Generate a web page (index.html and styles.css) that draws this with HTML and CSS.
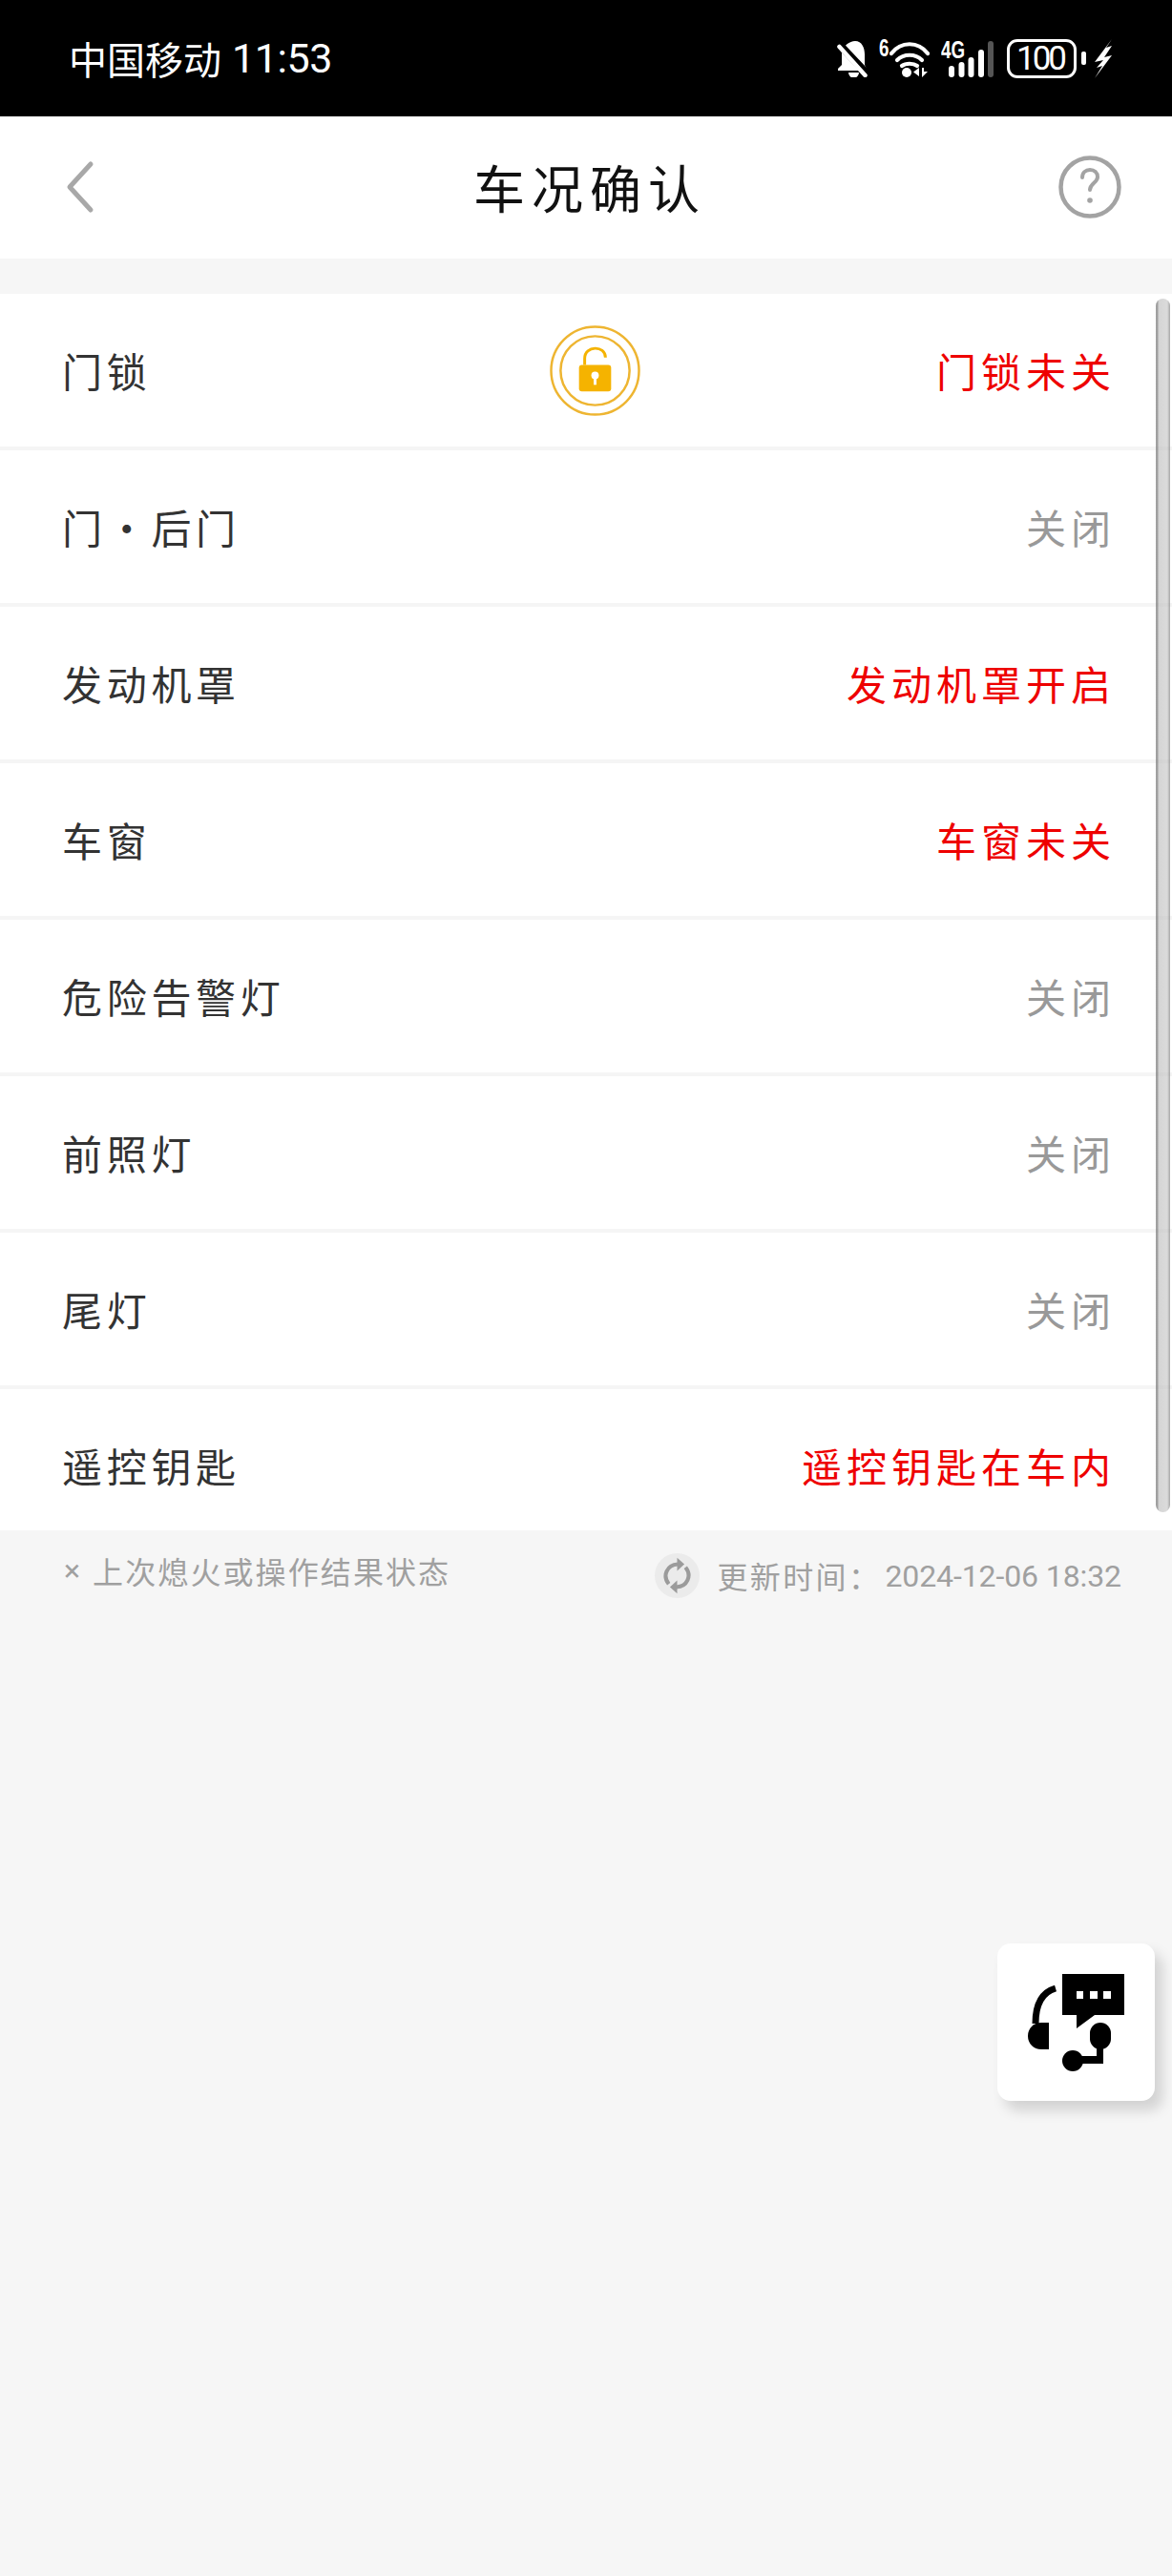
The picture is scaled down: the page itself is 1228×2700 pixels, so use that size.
FILE: index.html
```html
<!DOCTYPE html>
<html lang="zh-CN">
<head>
<meta charset="utf-8">
<title>车况确认</title>
<link rel="stylesheet" href="styles.css">
</head>
<body>
<div class="screen">
  <div class="statusbar">
    <div class="carrier">中国移动<span class="clock">11:53</span></div>
    <div class="status-icons">
      <svg class="ic-bell" viewBox="0 0 32 38"><path fill="#fff" d="M19 0c7 0 10 7 10 14v11l3 6H1v-2l4-4V11C7 5 13 0 19 0z"/><path fill="#fff" d="M12 33h11a5.500 5.500 0 0 1-11 0z"/><path d="M0 1l33 35" stroke="#000" stroke-width="8"/><path d="M2.500 6l27 30" stroke="#fff" stroke-width="4.500" stroke-linecap="round"/></svg>
      <span class="net-tag">6</span>
      <svg class="ic-wifi" viewBox="0 0 42 38"><g fill="none" stroke="#fff" stroke-width="4.200" stroke-linecap="round"><path d="M2 13C12 0 30 0 40 13"/><path d="M8 20c7-7 19-7 26 0"/><path d="M13 26c4-3 12-3 16 0"/></g><circle cx="18" cy="33" r="5" fill="#fff"/><path fill="#fff" d="M31 28v9l-6-4.500zM34 28h2v4h4l-6 6z"/></svg>
      <div class="signal">
        <span class="net-tag net-tag-4g">4G</span>
        <svg class="ic-bars" viewBox="0 0 47 38"><g fill="#fff"><rect x="0" y="26" width="6" height="12" rx="3"/><rect x="10.500" y="22" width="6" height="16" rx="3"/><rect x="20.500" y="17" width="6" height="21" rx="3"/><rect x="31" y="9" width="6" height="29" rx="3"/></g><rect x="41" y="0" width="6" height="38" rx="3" fill="#555"/></svg>
      </div>
      <div class="battery"><span class="battery-level">100</span></div>
      <span class="battery-cap"></span>
      <svg class="ic-bolt" viewBox="0 0 18 41"><path fill="#fff" d="M18 0L0 24l9-2-7 8 6-2-8 13 18-24-8 2 8-12-6 2z"/></svg>
    </div>
  </div>

  <header class="navbar">
    <svg class="ic-back" viewBox="0 0 32 56"><path d="M27 4L5 28l22 24" fill="none" stroke="#a8a8a8" stroke-width="5" stroke-linecap="round" stroke-linejoin="round"/></svg>
    <h1 class="title">车况确认</h1>
    <svg class="ic-help" viewBox="0 0 66 66"><circle cx="33" cy="33" r="30.500" fill="none" stroke="#a3a3a3" stroke-width="4.500"/><path d="M25 23c0-5 3.500-8 8-8s8 3 8 7.500c0 6-8 6.500-8 13.500" fill="none" stroke="#a3a3a3" stroke-width="4" stroke-linecap="round"/><circle cx="33" cy="47" r="2.800" fill="#a3a3a3"/></svg>
  </header>

  <section class="panel">
    <ul class="list">
      <li class="row">
        <span class="label label-lock">门锁</span>
        <svg class="ic-lock" viewBox="0 0 96 96"><circle cx="48" cy="48" r="46.500" fill="none" stroke="#eeb531" stroke-width="2.500"/><circle cx="48" cy="48" r="36.500" fill="none" stroke="#eeb531" stroke-width="2.500"/><path d="M37 42V35c0-14 22-14 22-1" fill="none" stroke="#f5b300" stroke-width="3"/><rect x="31" y="42" width="34" height="28" rx="3" fill="#f5b300"/><circle cx="48" cy="53" r="4" fill="#fff"/><rect x="46.500" y="54" width="3" height="9" fill="#fff"/></svg>
        <span class="value alert">门锁未关</span>
      </li>
      <li class="row"><span class="label">门・后门</span><span class="value">关闭</span></li>
      <li class="row"><span class="label">发动机罩</span><span class="value alert">发动机罩开启</span></li>
      <li class="row"><span class="label">车窗</span><span class="value alert">车窗未关</span></li>
      <li class="row"><span class="label">危险告警灯</span><span class="value">关闭</span></li>
      <li class="row"><span class="label">前照灯</span><span class="value">关闭</span></li>
      <li class="row"><span class="label">尾灯</span><span class="value">关闭</span></li>
      <li class="row"><span class="label">遥控钥匙</span><span class="value alert">遥控钥匙在车内</span></li>
    </ul>
    <div class="scrollbar"></div>
  </section>

  <div class="meta">
    <span class="note"><span class="note-x">×</span>上次熄火或操作结果状态</span>
    <div class="update">
      <span class="refresh">
        <svg viewBox="0 0 46 62"><g fill="none" stroke="#9b9b9b" stroke-width="6.500"><path d="M9 45C-2 31 6 13 24 12"/><path d="M37 17c11 14 3 32-15 33"/></g><path fill="#9b9b9b" d="M23 1l12 11-12 11zM23 39v22L11 50z"/></svg>
      </span>
      <span class="update-label">更新时间：</span>
      <span class="update-time">2024-12-06 18:32</span>
    </div>
  </div>

  <div class="float-btn">
    <svg viewBox="0 0 101 102"><path d="M29 15C15 19 8 31 8 52" fill="none" stroke="#000" stroke-width="7"/><path d="M22 51v28h-8C6 79 0 73 0 65s6-14 14-14z"/><path d="M36 0h65v43H70L51 57V43H36z"/><g fill="#fff"><rect x="51" y="18" width="7" height="8"/><rect x="65" y="18" width="8" height="8"/><rect x="79" y="18" width="8" height="8"/></g><rect x="65" y="51" width="22" height="28" rx="11"/><path d="M72 75h7v19H50v-8h22z"/><circle cx="47" cy="91" r="11"/></svg>
  </div>
</div>
</body>
</html>
```
FILE: styles.css
```css
* { box-sizing: border-box; margin: 0; padding: 0; }
html, body { width: 1228px; height: 2700px; overflow: hidden; }
body { background: #f6f6f6; font-family: "Noto Sans CJK SC", "Noto Sans", sans-serif; }
.screen { position: relative; width: 1228px; height: 2700px; background: #f6f6f6; display: flex; flex-direction: column; }

.statusbar { height: 122px; background: #000; color: #fff; display: flex; align-items: center; justify-content: space-between; padding: 0 63px 0 72px; }
.carrier { display: flex; align-items: center; font-size: 40px; font-weight: 400; line-height: 1; }
.clock { font-family: "Roboto", sans-serif; font-size: 43px; font-weight: 400; letter-spacing: -.4px; margin-left: 11px; }
.status-icons { display: flex; align-items: flex-start; height: 41px; margin-top: 1px; }
.ic-bell { width: 32px; height: 38px; margin: 2px 12px 0 0; }
.net-tag { font: 700 25px/19px "Liberation Sans", sans-serif; color: #fff; width: 11px; transform: scaleX(.75); transform-origin: left top; }
.ic-wifi { width: 42px; height: 38px; margin: 2px 12px 0 0; }
.signal { position: relative; width: 55px; height: 41px; margin-right: 14px; display: flex; justify-content: flex-end; }
.net-tag-4g { position: absolute; left: 0; top: 2px; width: auto; }
.ic-bars { width: 47px; height: 38px; margin-top: 2px; }
.battery { width: 73px; height: 41px; border: 3px solid #fff; border-radius: 11px; display: flex; align-items: center; justify-content: center; }
.battery-level { font: 400 35px/1 "Roboto", sans-serif; color: #fff; letter-spacing: -3px; margin-left: -3px; }
.battery-cap { width: 5px; height: 14px; background: #fff; border-radius: 2px; margin: 13px 9px 0 5px; }
.ic-bolt { width: 18px; height: 41px; }

.navbar { height: 149px; background: #fff; display: grid; grid-template-columns: 1fr auto 1fr; align-items: center; padding: 0 53px 0 68px; margin-bottom: 37px; }
.ic-back { width: 32px; height: 56px; margin-top: -2px; }
.title { font-size: 54px; font-weight: 400; color: #111; letter-spacing: 7px; line-height: 1; margin: -2px 0 0 -7px; }
.ic-help { width: 66px; height: 66px; justify-self: end; margin-top: -2px; }

.panel { position: relative; background: #fff; height: 1296px; overflow: hidden; }
.list { list-style: none; }
.row { height: 164px; border-bottom: 4px solid #f5f5f5; display: flex; align-items: center; padding: 0 64px 1px 65px; }
.label { font-size: 42px; color: #333; letter-spacing: 4.700px; line-height: 1; }
.label-lock { width: 511px; }
.value { font-size: 42px; color: #999; letter-spacing: 5px; line-height: 1; margin: 0 -5px 0 auto; }
.value.alert { color: #ee0000; }
.ic-lock { width: 95px; height: 95px; margin-top: 1px; }
.scrollbar { position: absolute; right: 2px; top: 5px; width: 15px; height: 1272px; border-radius: 8px; background: linear-gradient(90deg, rgba(120,120,120,.7) 0, rgba(120,120,120,.7) 2px, rgba(190,190,190,.65) 3px, rgba(195,195,195,.6) 12px, rgba(130,130,130,.7) 15px); }

.meta { height: 90px; display: flex; justify-content: space-between; padding: 0 53px 0 67px; font-size: 32px; color: #a0a0a0; }
.note { display: flex; align-items: center; letter-spacing: 2.100px; line-height: 1; height: 32px; margin-top: 26px; }
.note-x { font-family: "Roboto", sans-serif; margin-right: 13px; letter-spacing: 0; }
.update { display: flex; align-items: center; align-self: flex-start; margin-top: 24px; }
.refresh { width: 47px; height: 47px; border-radius: 50%; background: #ebebeb; display: flex; align-items: center; justify-content: center; margin-right: 18px; }
.refresh svg { width: 29px; height: 39px; }
.update-label { letter-spacing: 2.400px; line-height: 1; margin: -2px 4px 0 0; }
.update-time { font-family: "Roboto", sans-serif; font-size: 32px; line-height: 1; letter-spacing: -.1px; }

.float-btn { position: absolute; left: 1045px; top: 2037px; width: 165px; height: 165px; background: #fff; border-radius: 14px; box-shadow: 8px 10px 14px rgba(0,0,0,.15); display: flex; align-items: center; justify-content: center; }
.float-btn svg { width: 101px; height: 102px; }
```
